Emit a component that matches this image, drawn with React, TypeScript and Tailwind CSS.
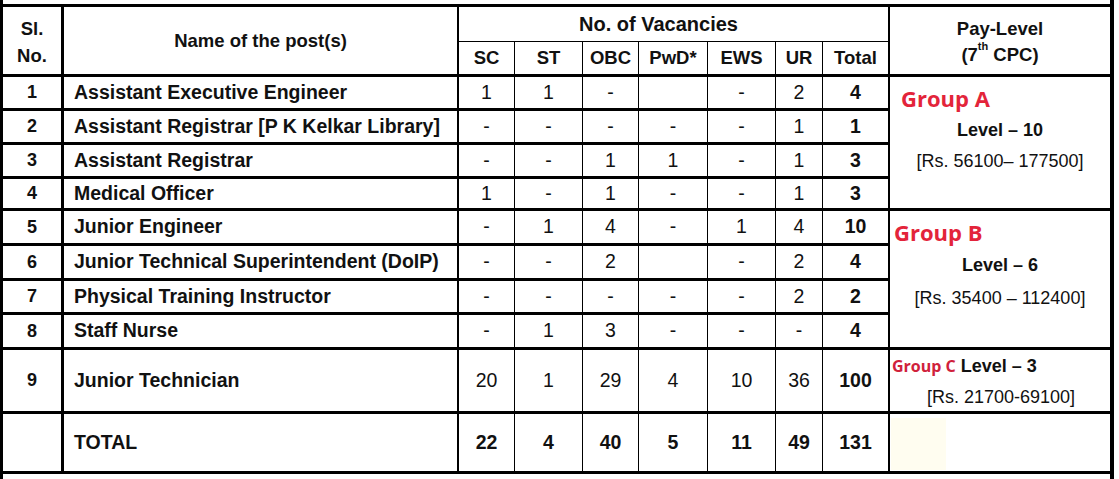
import React from "react";

type Row = { sl: string; name: string; vals: string[]; total: string };

const rows: Row[] = [
  { sl: "1", name: "Assistant Executive Engineer", vals: ["1", "1", "-", "", "-", "2"], total: "4" },
  { sl: "2", name: "Assistant Registrar [P K Kelkar Library]", vals: ["-", "-", "-", "-", "-", "1"], total: "1" },
  { sl: "3", name: "Assistant Registrar", vals: ["-", "-", "1", "1", "-", "1"], total: "3" },
  { sl: "4", name: "Medical Officer", vals: ["1", "-", "1", "-", "-", "1"], total: "3" },
  { sl: "5", name: "Junior Engineer", vals: ["-", "1", "4", "-", "1", "4"], total: "10" },
  { sl: "6", name: "Junior Technical Superintendent (DoIP)", vals: ["-", "-", "2", "", "-", "2"], total: "4" },
  { sl: "7", name: "Physical Training Instructor", vals: ["-", "-", "-", "-", "-", "2"], total: "2" },
  { sl: "8", name: "Staff Nurse", vals: ["-", "1", "3", "-", "-", "-"], total: "4" },
  { sl: "9", name: "Junior Technician", vals: ["20", "1", "29", "4", "10", "36"], total: "100" },
];

const heads = ["SC", "ST", "OBC", "PwD*", "EWS", "UR"];

const slCell = "flex items-center justify-center border-r-[3px] border-b-[3px] border-black text-[18px] font-bold";
const nameCell = "flex items-center pl-[10px] border-r-2 border-b-[3px] border-black text-[19.5px] font-bold whitespace-nowrap";
const valCell = "flex items-center justify-center border-r border-b-[3px] border-black text-[19.5px]";
const totCell = "flex items-center justify-center border-r-2 border-b-[3px] border-black text-[19.5px] font-bold";

function Pay({ children, span }: { children: React.ReactNode; span: string }) {
  return <div className={`${span} flex flex-col border-b-[3px] border-black`}>{children}</div>;
}

export default function App() {
  const body: React.ReactNode[] = [];
  rows.forEach((r, i) => {
    body.push(
      <div key={`sl${i}`} className={slCell}>{r.sl}</div>,
      <div key={`nm${i}`} className={nameCell}>{r.name}</div>,
      ...r.vals.map((v, j) => (
        <div key={`v${i}-${j}`} className={valCell}>{v}</div>
      )),
      <div key={`t${i}`} className={totCell}>{r.total}</div>
    );
    if (i === 0) {
      body.push(
        <Pay key="pa" span="row-span-4">
          <div className="pl-[11px] pt-[9px] leading-[24px] text-[22px] font-bold text-[#e3243a] font-['Open_Sans',sans-serif]">Group A</div>
          <div className="mt-[8px] text-center leading-[24px] text-[18px] font-bold">Level – 10</div>
          <div className="mt-[7px] text-center leading-[24px] text-[18px]">[Rs. 56100– 177500]</div>
        </Pay>
      );
    }
    if (i === 4) {
      body.push(
        <Pay key="pb" span="row-span-4">
          <div className="pl-[4px] pt-[9px] leading-[24px] text-[22px] font-bold text-[#e3243a] font-['Open_Sans',sans-serif]">Group B</div>
          <div className="mt-[9px] text-center leading-[24px] text-[18px] font-bold">Level – 6</div>
          <div className="mt-[9px] text-center leading-[24px] text-[18px]">[Rs. 35400 – 112400]</div>
        </Pay>
      );
    }
    if (i === 8) {
      body.push(
        <Pay key="pc" span="">
          <div className="flex items-baseline pl-[2px] pt-[4px] leading-[24px]">
            <span className="text-[16px] font-bold text-[#d0213b] font-['Open_Sans',sans-serif]">Group C</span>
            <span className="ml-[5px] text-[18px] font-bold">Level – 3</span>
          </div>
          <div className="mt-[7px] pl-[2px] text-center leading-[24px] text-[18px]">[Rs. 21700-69100]</div>
        </Pay>
      );
    }
  });

  return (
    <div className="w-[1119px] h-[479px] bg-white text-[#111] font-['Liberation_Sans',Arial,sans-serif]">
      <div className="w-[1114px] h-[479px] pt-[4px] border-l-[3px] border-r-[4px] border-black">
        <div className="grid grid-cols-[61px_395px_56px_68px_56px_69px_68px_47px_67px_220px] grid-rows-[35px_35px_34px_34px_34px_32px_35px_35px_34px_35px_64px_60px] border-t-[3px] border-black">
          <div className="row-span-2 flex flex-col items-center justify-center pt-[2px] border-r-[3px] border-b-[3px] border-black text-[18.5px] font-bold leading-[27px]">
            <span>Sl.</span>
            <span>No.</span>
          </div>
          <div className="row-span-2 flex items-center justify-center border-r-2 border-b-[3px] border-black text-[18.5px] font-bold">
            Name of the post(s)
          </div>
          <div className="col-span-7 flex items-center justify-center pr-[30px] border-r-2 border-b border-black text-[20px] font-bold">
            No. of Vacancies
          </div>
          <div className="row-span-2 flex flex-col items-center justify-center pt-[2px] border-b-[3px] border-black text-[18.5px] font-bold leading-[26px]">
            <span>Pay-Level</span>
            <span>
              (7<sup className="text-[11px] align-[5px]">th</sup> CPC)
            </span>
          </div>
          {heads.map((h) => (
            <div key={h} className="flex items-center justify-center border-r border-b-[3px] border-black text-[18.5px] font-bold">
              {h}
            </div>
          ))}
          <div className="flex items-center justify-center border-r-2 border-b-[3px] border-black text-[18.5px] font-bold">Total</div>
          {body}
          <div className={slCell}></div>
          <div className={nameCell}>TOTAL</div>
          {["22", "4", "40", "5", "11", "49"].map((v, j) => (
            <div key={`tt${j}`} className={`${valCell} font-bold`}>{v}</div>
          ))}
          <div className={totCell}>131</div>
          <div className="border-b-[3px] border-black">
            <div className="ml-[1px] mt-[4px] h-[52px] w-[55px] bg-[#fffdf0]"></div>
          </div>
        </div>
      </div>
    </div>
  );
}
